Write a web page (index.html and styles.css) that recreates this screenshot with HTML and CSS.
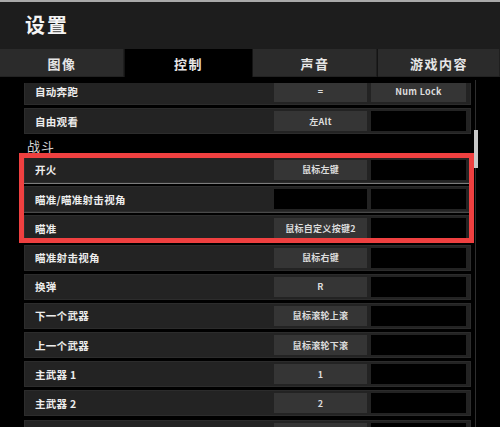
FILE: index.html
```html
<!DOCTYPE html>
<html lang="zh-CN">
<head>
<meta charset="utf-8">
<title>设置</title>
<link rel="stylesheet" href="styles.css">
</head>
<body>
<div class="screen">
  <div class="top-strip"></div>
  <header class="header"><h1 class="title">设置</h1></header>
  <nav class="tabs">
    <div class="tab">图像</div>
    <div class="tab active">控制</div>
    <div class="tab">声音</div>
    <div class="tab">游戏内容</div>
  </nav>
  <main class="content">
    <div class="viewport">
      <div class="list">
        <div class="row"><span class="label">自动奔跑</span><span class="key filled">=</span><span class="key filled">Num Lock</span></div>
        <div class="row"><span class="label">自由观看</span><span class="key filled">左Alt</span><span class="key"></span></div>
        <div class="section">战斗</div>
        <div class="row hl1"><span class="label">开火</span><span class="key filled">鼠标左键</span><span class="key"></span></div>
        <div class="row hl2"><span class="label">瞄准/瞄准射击视角</span><span class="key"></span><span class="key"></span></div>
        <div class="row"><span class="label">瞄准</span><span class="key filled">鼠标自定义按键2</span><span class="key"></span></div>
        <div class="row"><span class="label">瞄准射击视角</span><span class="key filled">鼠标右键</span><span class="key"></span></div>
        <div class="row"><span class="label">换弹</span><span class="key filled">R</span><span class="key"></span></div>
        <div class="row"><span class="label">下一个武器</span><span class="key filled">鼠标滚轮上滚</span><span class="key"></span></div>
        <div class="row"><span class="label">上一个武器</span><span class="key filled">鼠标滚轮下滚</span><span class="key"></span></div>
        <div class="row"><span class="label">主武器 1</span><span class="key filled">1</span><span class="key"></span></div>
        <div class="row"><span class="label">主武器 2</span><span class="key filled">2</span><span class="key"></span></div>
        <div class="row"><span class="label"></span><span class="key filled"></span><span class="key"></span></div>
      </div>
    </div>
    <div class="scrollbar"><div class="thumb"></div></div>
    <div class="annotation"></div>
  </main>
</div>
</body>
</html>
```
FILE: styles.css
```css
html, body {
  margin: 0;
  padding: 0;
  background: #000;
}
body {
  width: 500px;
  height: 427px;
  overflow: hidden;
  font-family: "Noto Sans CJK SC", "Noto Sans", sans-serif;
}
.screen {
  display: flex;
  flex-direction: column;
  height: 427px;
}
.top-strip {
  height: 2px;
  background: #a9a9a9;
}
.header {
  height: 47px;
  background: #1d1d1d;
  display: flex;
  align-items: center;
  padding-left: 25px;
  padding-bottom: 2px;
  box-sizing: border-box;
}
.title {
  margin: 0;
  font-size: 20px;
  font-weight: 700;
  color: #f4f4f4;
  letter-spacing: 2px;
  line-height: 1;
}
.tabs {
  height: 28px;
  display: grid;
  grid-template-columns: 124px 127px 124px 1fr;
  column-gap: 1px;
  background: #141414;
}
.tab {
  background: #2b2b2b;
  color: #e6e6e6;
  font-size: 13px;
  font-weight: 700;
  letter-spacing: 1.5px;
  display: flex;
  align-items: center;
  justify-content: center;
  box-shadow: inset -1px 0 0 #1f1f1f, inset 0 -1px 0 #222;
}
.tab.active {
  background: #000;
  box-shadow: none;
}
.content {
  position: relative;
  flex: 1;
  display: flex;
  padding-top: 6px;
  padding-left: 24px;
  overflow: hidden;
  background: #000;
}
.viewport {
  width: 447px;
  overflow: hidden;
}
.list {
  margin-top: -4.2px;
  display: flex;
  flex-direction: column;
  gap: 3.2px;
}
.row {
  height: 26px;
  box-sizing: border-box;
  display: flex;
  align-items: stretch;
  padding: 2px 4px 2px 0;
  background: #232323;
  border: 1px solid #2c2c2c;
  flex: none;
}
.row.hl1 {
  box-shadow: 0 1px 0 #7c7c7c;
}
.row.hl2 {
  box-shadow: 0 1px 0 #4a4a4a;
}
.label {
  flex: 1;
  display: flex;
  align-items: center;
  padding-left: 10px;
  color: #ececec;
  font-size: 10.5px;
  font-weight: 700;
  letter-spacing: 0.3px;
}
.key {
  width: 93px;
  flex: none;
  display: flex;
  align-items: center;
  justify-content: center;
  background: #000;
  color: #dcdcdc;
  font-size: 9px;
  font-weight: 700;
  letter-spacing: 0.3px;
}
.key + .key {
  width: 95px;
  margin-left: 4px;
}
.key.filled {
  background: #353535;
}
.section {
  height: 16.6px;
  flex: none;
  display: flex;
  align-items: center;
  padding-left: 3px;
  color: #d6d6d6;
  font-size: 13px;
  letter-spacing: 1px;
}
.scrollbar {
  width: 5px;
  margin-left: 2px;
  margin-top: -3px;
  background: linear-gradient(to right, transparent 2px, #2e2e2e 2px, #2e2e2e 3px, transparent 3px);
}
.thumb {
  margin-top: 50px;
  height: 38px;
  width: 4px;
  margin-left: 1px;
  background: #c8c8c8;
}
.annotation {
  position: absolute;
  left: 19px;
  top: 76px;
  width: 455px;
  height: 90px;
  box-sizing: border-box;
  border: 5px solid #ef4040;
  pointer-events: none;
}
```
